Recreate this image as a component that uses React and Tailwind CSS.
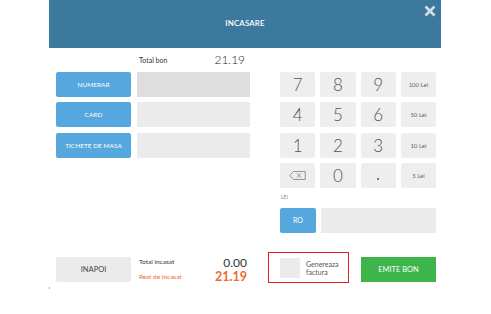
import React from 'react';

const payRows = [
  { label: 'NUMERAR', active: true },
  { label: 'CARD' },
  { label: 'TICHETE DE MASA' },
];

const keys = [
  ['7', '8', '9', '100 Lei'],
  ['4', '5', '6', '50 Lei'],
  ['1', '2', '3', '10 Lei'],
  ['back', '0', '.', '5 Lei'],
];

const Backspace = () => (
  <svg width="17" height="9" viewBox="0 0 17 9" fill="none" stroke="#8a8a8a" strokeWidth="0.9">
    <path d="M4.5 0.5 H16.2 V8.5 H4.5 L0.7 4.5 Z" />
    <path d="M8 2.3 L12 6.7 M12 2.3 L8 6.7" />
  </svg>
);

const Key = ({ k }) => {
  const isLei = k.includes('Lei');
  return (
    <div className="h-[25px] bg-[#eeeeee] rounded-[2px] flex items-center justify-center">
      {k === 'back' ? (
        <Backspace />
      ) : k === '.' ? (
        <span className="block w-[2px] h-[2px] bg-[#777] mt-[6px]" />
      ) : isLei ? (
        <span className="text-[6px] text-[#666]">{k}</span>
      ) : (
        <span className="text-[17px] font-light text-[#555] leading-none">{k}</span>
      )}
    </div>
  );
};

const App = () => {
  return (
    <div className="w-[491px] h-[314px] bg-white" style={{ fontFamily: 'Lato, "Open Sans", sans-serif' }}>
      <div className="ml-[49px] w-[392px] flex flex-col">
        <div className="relative h-[48px] bg-[#3d799e] flex items-center justify-center">
          <span className="text-white text-[8px] font-semibold tracking-[0.1px] -mt-[3px]">INCASARE</span>
          <svg className="absolute right-[5px] top-[5px]" width="12" height="12" viewBox="0 0 12 12">
            <path d="M1.5 1.5 L10.5 10.5 M10.5 1.5 L1.5 10.5" stroke="#d3dde5" strokeWidth="2.6" />
          </svg>
        </div>

        <div className="flex">
          <div className="ml-[7px] w-[194px] flex flex-col">
            <div className="h-[24px] flex items-center">
              <span className="ml-[83px] text-[7px] text-[#333]">Total bon</span>
              <span className="ml-[47px] text-[12px] font-light text-[#222]">21.19</span>
            </div>
            {payRows.map((r, i) => (
              <div key={r.label} className={`flex gap-[6px] ${i === 0 ? '' : i === 1 ? 'mt-[5px]' : 'mt-[6px]'}`}>
                <div className="w-[75px] h-[25px] bg-[#56a7dd] rounded-[2px] flex items-center justify-center text-white text-[6.5px]">
                  {r.label}
                </div>
                <div className={`w-[113px] h-[25px] ${r.active ? 'bg-[#dedede]' : 'bg-[#ebebeb]'}`} />
              </div>
            ))}
          </div>

          <div className="ml-[30px] w-[156px] flex flex-col">
            <div className="mt-[24px] flex flex-col">
              {keys.map((row, i) => (
                <div key={i} className={`grid grid-cols-4 gap-x-[5px] ${i === 0 ? '' : i === 2 ? 'mt-[6px]' : 'mt-[5px]'}`}>
                  {row.map(k => <Key key={k} k={k} />)}
                </div>
              ))}
            </div>
            <span className="mt-[7px] ml-[1px] text-[5px] leading-[5px] text-[#888]">LEI</span>
            <div className="mt-[8px] flex gap-[5px]">
              <div className="w-[36px] h-[25px] bg-[#56a7dd] rounded-[2px] flex items-center justify-center text-white text-[7px]">
                RO
              </div>
              <div className="w-[115px] h-[25px] bg-[#ebebeb]" />
            </div>
          </div>
        </div>

        <div className="mt-[19px] flex items-start">
          <div className="ml-[7px] mt-[5px] w-[75px] h-[25px] bg-[#ebebeb] rounded-[2px] flex items-center justify-center text-[7.5px] text-[#444]">
            INAPOI
          </div>
          <div className="ml-[8px] mt-[5px] w-[108px] flex flex-col">
            <div className="flex items-center justify-between h-[11px]">
              <span className="text-[6.5px] leading-none text-[#333]">Total incasat</span>
              <span className="text-[12px] leading-none text-[#333]">0.00</span>
            </div>
            <div className="flex items-center justify-between h-[12px] mt-[3px]">
              <span className="text-[6.5px] leading-none text-[#f26a2e]">Rest de incasat</span>
              <span className="text-[12.5px] leading-none font-bold text-[#f26a2e]">21.19</span>
            </div>
          </div>
          <div className="ml-[21px] w-[81px] h-[31px] border border-[#e02020] flex items-center">
            <div className="ml-[11px] w-[20px] h-[20px] bg-[#ebebeb]" />
            <span className="ml-[6px] text-[7px] leading-[8px] text-[#555]">Genereaza<br />factura</span>
          </div>
          <div className="ml-[12px] mt-[5px] w-[75px] h-[25px] bg-[#3db54a] flex items-center justify-center text-white text-[7.5px]">
            EMITE BON
          </div>
        </div>
        <div className="mt-[4px] w-[1px] h-[2px] bg-[#aaa]" />
      </div>
    </div>
  );
};

export default App;
